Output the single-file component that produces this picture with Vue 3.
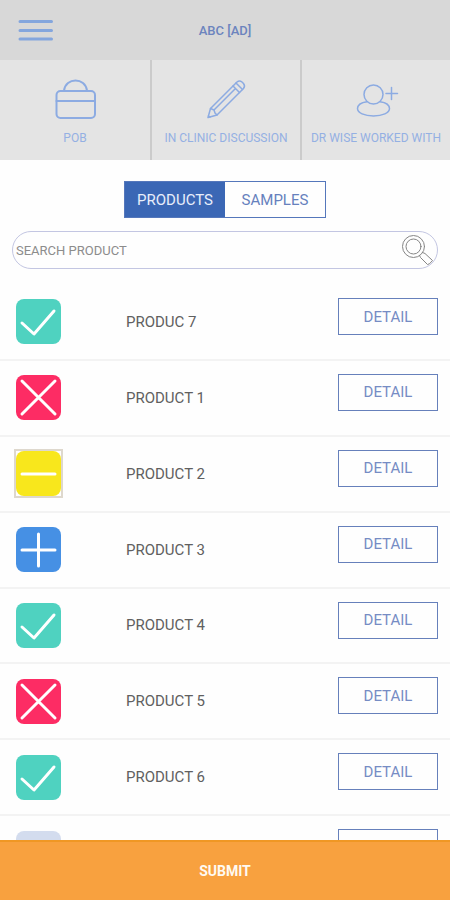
<script setup>
import { ref } from 'vue'

const tab = ref('products')
const query = ref('')
const products = ref([
  { name: 'PRODUC 7', state: 'check' },
  { name: 'PRODUCT 1', state: 'cross' },
  { name: 'PRODUCT 2', state: 'minus' },
  { name: 'PRODUCT 3', state: 'plus' },
  { name: 'PRODUCT 4', state: 'check' },
  { name: 'PRODUCT 5', state: 'cross' },
  { name: 'PRODUCT 6', state: 'check' },
  { name: '', state: 'none' },
])
const marks = {
  check: 'M6 24 L18 35 L38 12',
  cross: 'M6 6 L39 39 M39 6 L6 39',
  minus: 'M6 23 H39',
  plus: 'M6 23 H39 M22.5 7 V39',
  none: '',
}
</script>

<template>
  <div class="page">
    <header class="top">
      <button class="menu" type="button" aria-label="Menu">
        <svg width="36" height="24" viewBox="0 0 36 24">
          <path d="M2 3.500 H33.500 M2 12.500 H33.500 M2 21 H33.500" />
        </svg>
      </button>
      <h1 class="title">ABC [AD]</h1>
    </header>

    <nav class="actions">
      <a class="action" href="#pob">
        <svg class="icon bold" width="48" height="44" viewBox="0 0 48 44">
          <path d="M13 13.500 C14 7 19 3.500 24.500 3.500 C30 3.500 35 7 36 13.500" />
          <rect x="5.500" y="14" width="38.500" height="27" rx="4" />
          <path d="M5.500 24 H44" />
        </svg>
        <span>POB</span>
      </a>
      <a class="action" href="#discussion">
        <svg class="icon" width="48" height="44" viewBox="0 0 48 44">
          <path d="M6 40.500 L8.500 31.500 L35 5 Q37.500 3 40 5 L41.500 6.500 Q43.500 9 41.500 11.500 L15 38 Z" />
          <path d="M8.500 31.500 L12 33 L13 36 L15 38 M31 9 L37.500 15.500 M34 6 L40.500 12.500 M12 33 L33.500 11.500 M6.500 39 L8 40" />
        </svg>
        <span>IN CLINIC DISCUSSION</span>
      </a>
      <a class="action" href="#worked-with">
        <svg class="icon" width="48" height="44" viewBox="0 0 48 44">
          <circle cx="21.500" cy="17.500" r="9.500" />
          <path d="M15 24.700 C9.500 25.500 5.500 28 5.500 31.500 C5.500 36 12.500 39 21.500 39 C30.500 39 37.500 36 37.500 31.500 C37.500 28 33.500 25.500 28 24.700 M34 16.500 H45.500 M39.500 10.500 V22.500" />
        </svg>
        <span>DR WISE WORKED WITH</span>
      </a>
    </nav>

    <main class="content">
      <div class="tabs" role="tablist">
        <button type="button" role="tab" :aria-selected="tab === 'products'" :class="{ on: tab === 'products' }" @click="tab = 'products'">PRODUCTS</button>
        <button type="button" role="tab" :aria-selected="tab === 'samples'" :class="{ on: tab === 'samples' }" @click="tab = 'samples'">SAMPLES</button>
      </div>

      <form class="search" @submit.prevent>
        <input v-model="query" type="text" aria-label="Search product" placeholder="SEARCH PRODUCT" />
        <button type="submit" aria-label="Search">
          <svg width="32" height="32" viewBox="0 0 32 32">
            <circle cx="12.500" cy="12.500" r="11" />
            <circle cx="12.500" cy="12.500" r="7.500" />
            <path d="M18.500 21.500 L19.500 23.500 L26.500 30.500 Q28 31 31.500 26.500 L24 19.500 L21.500 18.500" />
          </svg>
        </button>
      </form>

      <div class="scroller">
        <ul class="list">
          <li v-for="(p, i) in products" :key="i" class="row">
            <button type="button" class="state" :class="p.state" :aria-label="p.state">
              <svg width="45" height="45" viewBox="0 0 45 45"><path :d="marks[p.state]" /></svg>
            </button>
            <span class="name">{{ p.name }}</span>
            <button type="button" class="detail">DETAIL</button>
          </li>
        </ul>
      </div>
    </main>

    <button class="submit" type="button">SUBMIT</button>
  </div>
</template>

<style>
body {
  margin: 0;
  background: #fff;
}
</style>

<style scoped>
.page {
  display: flex;
  flex-direction: column;
  height: 100vh;
  font-family: Roboto, "Liberation Sans", sans-serif;
  background: #fefefe;
}
button,
input {
  margin: 0;
  padding: 0;
  border: 0;
  background: none;
  font: inherit;
  color: inherit;
}
svg {
  display: block;
  fill: none;
  stroke-linecap: round;
  stroke-linejoin: round;
}
.top {
  display: grid;
  grid-template-columns: 36px 1fr 36px;
  align-items: center;
  flex: none;
  height: 60px;
  padding: 0 18px;
  background: #d8d8d8;
}
.menu svg {
  stroke: #84a6dd;
  stroke-width: 3px;
}
.title {
  margin: 0;
  text-align: center;
  font-size: 13px;
  font-weight: 500;
  color: #6c84be;
}
.actions {
  display: grid;
  grid-template-columns: repeat(3, 1fr);
  flex: none;
  height: 100px;
  background: #e4e4e4;
}
.action {
  display: flex;
  flex-direction: column;
  align-items: center;
  gap: 9px;
  padding-top: 17px;
  color: #94b0e3;
  font-size: 12px;
  line-height: 16px;
  white-space: nowrap;
  text-decoration: none;
}
.action + .action {
  border-left: 2px solid #cbcbcb;
}
.icon {
  stroke: #8cabe2;
  stroke-width: 1.5px;
}
.icon.bold {
  stroke-width: 2px;
}
.content {
  display: flex;
  flex-direction: column;
  flex: 1;
  min-height: 0;
  padding-top: 21px;
}
.tabs {
  display: grid;
  grid-template-columns: 1fr 1fr;
  align-self: center;
  flex: none;
  width: 202px;
  height: 37px;
  box-sizing: border-box;
  border: 1px solid #5577bb;
}
.tabs button {
  font-size: 15px;
  color: #6681bd;
}
.tabs .on {
  background: #3b67b5;
  color: #e8eefb;
}
.search {
  display: flex;
  align-items: center;
  flex: none;
  box-sizing: border-box;
  height: 38px;
  margin: 13px 12px 16px;
  padding: 0 4px 0 3px;
  border: 1px solid #c3c6e2;
  border-radius: 19px;
}
.search input {
  flex: 1;
  min-width: 0;
  font-size: 13px;
  color: #555;
}
.search input::placeholder {
  color: #8c8c8c;
  opacity: 1;
}
.search svg {
  stroke: #858585;
  stroke-width: 1px;
}
.scroller {
  flex: 1;
  min-height: 0;
  overflow-y: auto;
  scrollbar-width: none;
}
.list {
  display: grid;
  grid-auto-rows: 1fr;
  height: 607px;
  margin: 0;
  padding: 0;
  list-style: none;
}
.row {
  display: grid;
  grid-template-columns: 110px 1fr 100px;
  align-items: center;
  box-sizing: border-box;
  padding: 0 12px 0 16px;
  border-bottom: 2px solid #f3f3f3;
}
.state {
  width: 45px;
  height: 45px;
}
.state svg {
  border-radius: 8px;
  stroke: #fff;
  stroke-width: 3px;
}
.check svg {
  background: #4fd2c0;
}
.cross svg {
  background: #fd2c64;
}
.minus {
  outline: 2px solid #ded8cd;
}
.minus svg {
  background: #f8e71c;
}
.plus svg {
  background: #4690e4;
}
.none svg {
  background: #d3dcee;
}
.name {
  font-size: 15px;
  color: #606060;
}
.detail {
  align-self: start;
  height: 37px;
  margin-top: 13px;
  border: 1px solid #6680bb;
  font-size: 15px;
  color: #768cc4;
}
.submit {
  flex: none;
  height: 60px;
  border-top: 2px solid #f09724;
  background: #f8a13f;
  color: #fffaf2;
  font-size: 14px;
  font-weight: 700;
}
</style>
